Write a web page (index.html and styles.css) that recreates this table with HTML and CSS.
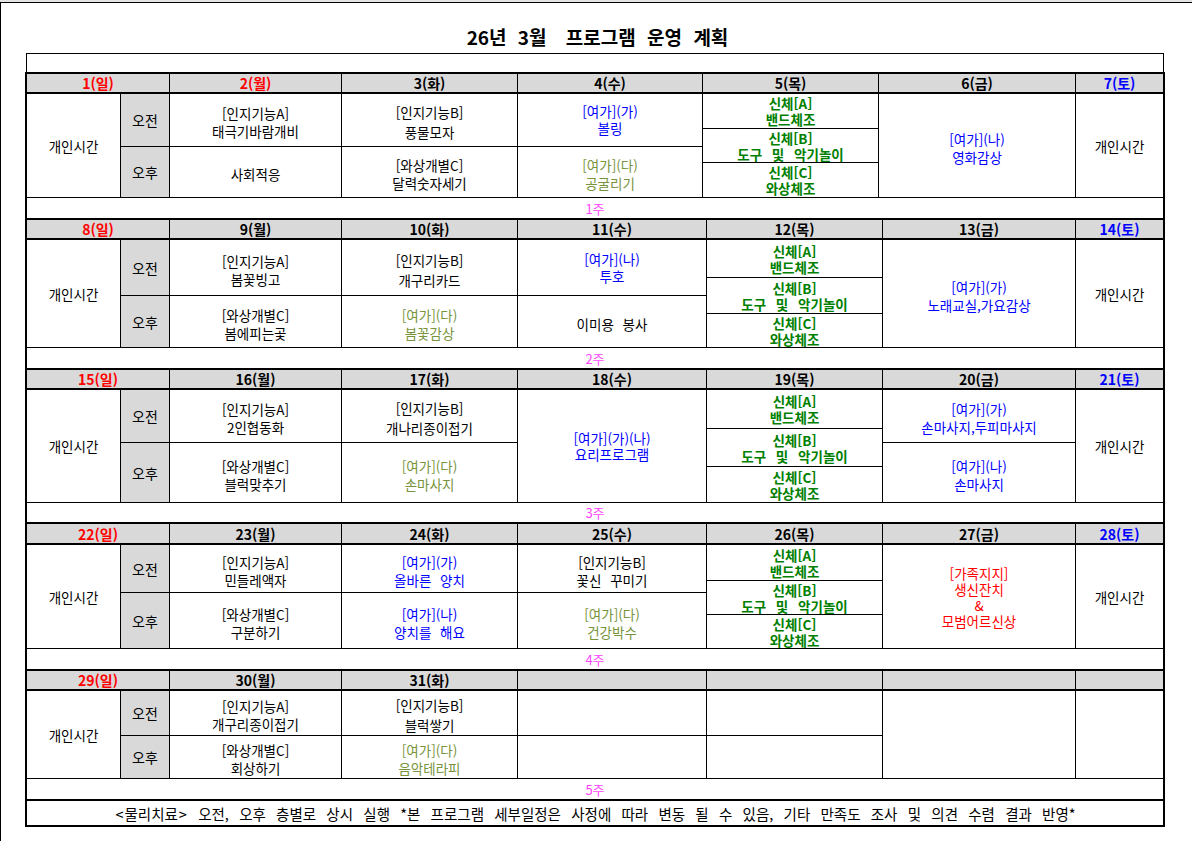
FILE: index.html
```html
<!DOCTYPE html>
<html lang="ko">
<head>
<meta charset="utf-8">
<title>26년 3월 프로그램 운영 계획</title>
<link rel="stylesheet" href="styles.css">
</head>
<body>
<div class="frame">
  <h1 class="title"><span class="t-a">26년 3월</span> 프로그램 운영 계획</h1>
  <div class="sheet">
    <div class="sheet-top"></div>
    <div class="weeks">

      <!-- week 1 -->
      <div class="wk w1">
        <div class="head">
          <div class="h span2 red">1(일)</div>
          <div class="h red">2(월)</div>
          <div class="h">3(화)</div>
          <div class="h">4(수)</div>
          <div class="h">5(목)</div>
          <div class="h">6(금)</div>
          <div class="h blue">7(토)</div>
        </div>
        <div class="body rows1">
          <div class="c k1 all">개인시간</div>
          <div class="c g k2 am">오전</div>
          <div class="c g k2 pm">오후</div>
          <div class="c k3 am"><p>[인지기능A]<br>태극기바람개비</p></div>
          <div class="c k3 pm"><p>사회적응</p></div>
          <div class="c k4 am"><p class="wide">[인지기능B]<br>풍물모자</p></div>
          <div class="c k4 pm"><p>[와상개별C]<br>달력숫자세기</p></div>
          <div class="c k5 am blue"><p class="up">[여가](가)<br>볼링</p></div>
          <div class="c k5 pm olive"><p>[여가](다)<br>공굴리기</p></div>
          <div class="c k6 t1 grn"><p>신체[A]<br>밴드체조</p></div>
          <div class="c k6 t2 grn"><p>신체[B]<br>도구 및 악기놀이</p></div>
          <div class="c k6 t3 grn"><p>신체[C]<br>와상체조</p></div>
          <div class="c k7 all blue"><p>[여가](나)<br>영화감상</p></div>
          <div class="c k8 all">개인시간</div>
        </div>
        <div class="lbl">1주</div>
      </div>

      <!-- week 2 -->
      <div class="wk">
        <div class="head">
          <div class="h span2 red">8(일)</div>
          <div class="h">9(월)</div>
          <div class="h">10(화)</div>
          <div class="h">11(수)</div>
          <div class="h">12(목)</div>
          <div class="h">13(금)</div>
          <div class="h blue">14(토)</div>
        </div>
        <div class="body rows2">
          <div class="c k1 all">개인시간</div>
          <div class="c g k2 am">오전</div>
          <div class="c g k2 pm">오후</div>
          <div class="c k3 am"><p>[인지기능A]<br>봄꽃빙고</p></div>
          <div class="c k3 pm"><p>[와상개별C]<br>봄에피는곷</p></div>
          <div class="c k4 am"><p class="wide">[인지기능B]<br>개구리카드</p></div>
          <div class="c k4 pm olive"><p>[여가](다)<br>봄꽃감상</p></div>
          <div class="c k5 am blue"><p class="up">[여가](나)<br>투호</p></div>
          <div class="c k5 pm"><p>이미용 봉사</p></div>
          <div class="c k6 t1 grn"><p>신체[A]<br>밴드체조</p></div>
          <div class="c k6 t2 grn"><p>신체[B]<br>도구 및 악기놀이</p></div>
          <div class="c k6 t3 grn"><p>신체[C]<br>와상체조</p></div>
          <div class="c k7 all blue"><p>[여가](가)<br>노래교실,가요감상</p></div>
          <div class="c k8 all">개인시간</div>
        </div>
        <div class="lbl">2주</div>
      </div>

      <!-- week 3 -->
      <div class="wk">
        <div class="head">
          <div class="h span2 red">15(일)</div>
          <div class="h">16(월)</div>
          <div class="h">17(화)</div>
          <div class="h">18(수)</div>
          <div class="h">19(목)</div>
          <div class="h">20(금)</div>
          <div class="h blue">21(토)</div>
        </div>
        <div class="body rows3">
          <div class="c k1 all">개인시간</div>
          <div class="c g k2 am">오전</div>
          <div class="c g k2 pm">오후</div>
          <div class="c k3 am"><p>[인지기능A]<br>2인협동화</p></div>
          <div class="c k3 pm"><p>[와상개별C]<br>블럭맞추기</p></div>
          <div class="c k4 am"><p class="wide">[인지기능B]<br>개나리종이접기</p></div>
          <div class="c k4 pm olive"><p>[여가](다)<br>손마사지</p></div>
          <div class="c k5 all blue"><p class="snug">[여가](가)(나)<br>요리프로그램</p></div>
          <div class="c k6 t1 grn"><p>신체[A]<br>밴드체조</p></div>
          <div class="c k6 t2 grn"><p>신체[B]<br>도구 및 악기놀이</p></div>
          <div class="c k6 t3 grn"><p>신체[C]<br>와상체조</p></div>
          <div class="c k7 am blue"><p>[여가](가)<br>손마사지,두피마사지</p></div>
          <div class="c k7 pm blue"><p>[여가](나)<br>손마사지</p></div>
          <div class="c k8 all">개인시간</div>
        </div>
        <div class="lbl short">3주</div>
      </div>

      <!-- week 4 -->
      <div class="wk">
        <div class="head tall">
          <div class="h span2 red">22(일)</div>
          <div class="h">23(월)</div>
          <div class="h">24(화)</div>
          <div class="h">25(수)</div>
          <div class="h">26(목)</div>
          <div class="h">27(금)</div>
          <div class="h blue">28(토)</div>
        </div>
        <div class="body rows4">
          <div class="c k1 all">개인시간</div>
          <div class="c g k2 am">오전</div>
          <div class="c g k2 pm">오후</div>
          <div class="c k3 am"><p>[인지기능A]<br>민들레액자</p></div>
          <div class="c k3 pm"><p>[와상개별C]<br>구분하기</p></div>
          <div class="c k4 am blue"><p>[여가](가)<br>올바른 양치</p></div>
          <div class="c k4 pm blue"><p>[여가](나)<br>양치를 해요</p></div>
          <div class="c k5 am"><p>[인지기능B]<br>꽃신 꾸미기</p></div>
          <div class="c k5 pm olive"><p>[여가](다)<br>건강박수</p></div>
          <div class="c k6 t1 grn"><p>신체[A]<br>밴드체조</p></div>
          <div class="c k6 t2 grn"><p>신체[B]<br>도구 및 악기놀이</p></div>
          <div class="c k6 t3 grn"><p>신체[C]<br>와상체조</p></div>
          <div class="c k7 all red"><p class="tall-lines">[가족지지]<br>생신잔치<br>&amp;<br>모범어르신상</p></div>
          <div class="c k8 all">개인시간</div>
        </div>
        <div class="lbl">4주</div>
      </div>

      <!-- week 5 -->
      <div class="wk">
        <div class="head">
          <div class="h span2 red">29(일)</div>
          <div class="h">30(월)</div>
          <div class="h">31(화)</div>
          <div class="h"></div>
          <div class="h"></div>
          <div class="h"></div>
          <div class="h"></div>
        </div>
        <div class="body rows5">
          <div class="c k1 all">개인시간</div>
          <div class="c g k2 am">오전</div>
          <div class="c g k2 pm">오후</div>
          <div class="c k3 am"><p>[인지기능A]<br>개구리종이접기</p></div>
          <div class="c k3 pm"><p>[와상개별C]<br>회상하기</p></div>
          <div class="c k4 am"><p class="wide">[인지기능B]<br>블럭쌓기</p></div>
          <div class="c k4 pm olive"><p>[여가](다)<br>음악테라피</p></div>
          <div class="c k5 am"></div>
          <div class="c k5 pm"></div>
          <div class="c k6 am"></div>
          <div class="c k6 pm"></div>
          <div class="c k7 all"></div>
          <div class="c k8 all"></div>
        </div>
        <div class="lbl">5주</div>
      </div>

      <div class="foot"><span class="ang">&lt;</span>물리치료<span class="ang">&gt;</span> 오전, 오후 층별로 상시 실행 *본 프로그램 세부일정은 사정에 따라 변동 될 수 있음, 기타 만족도 조사 및 의견 수렴 결과 반영*</div>
    </div>
  </div>
</div>
</body>
</html>
```
FILE: styles.css
```css
html, body {
  margin: 0;
  padding: 0;
  background: #fff;
}
body {
  border-top: 2px solid #e4e4e4;
  font-family: "Noto Sans CJK KR", "Noto Sans", sans-serif;
  color: #000;
}
.frame {
  border-top: 1px solid #000;
  border-left: 1px solid #000;
  height: 839px;
  box-sizing: border-box;
  overflow: hidden;
}
.title {
  margin: 0;
  padding-top: 20px;
  height: 28px;
  line-height: 28px;
  font-size: 19px;
  font-weight: bold;
  text-align: center;
  word-spacing: 6px;
  padding-left: 2px;
}
.t-a {
  margin-right: 8px;
}
.sheet {
  margin: 2px 0 0 24px;
  width: 1140px;
}
.sheet-top {
  height: 19px;
  margin: 0 1px;
  border: 1px solid #000;
  border-bottom: none;
  box-sizing: border-box;
}
.weeks {
  border-left: 2px solid #000;
  border-right: 2px solid #000;
}
.head,
.body {
  display: grid;
  grid-template-columns: 93px 48px 171px 175px 188px 175px 192px 87px;
  column-gap: 1px;
  background: #000;
}
.w1 .head,
.w1 .body {
  grid-template-columns: 93px 48px 171px 175px 184px 175px 196px 87px;
}
.head {
  height: 22px;
  box-sizing: border-box;
  border-top: 2px solid #000;
  border-bottom: 2px solid #000;
}
.head.tall {
  height: 23px;
}
.h {
  background: #d9d9d9;
  display: flex;
  align-items: center;
  justify-content: center;
  font-size: 14px;
  font-weight: bold;
  line-height: 18px;
}
.span2 {
  grid-column: span 2;
}
.body {
  row-gap: 1px;
  border-bottom: 1px solid #000;
}
.rows1 { grid-template-rows: 34px 17px 15px 34px; }
.rows2 { grid-template-rows: 37px 17px 17px 33px; }
.rows3 { grid-template-rows: 38px 13px 23px 35px; }
.rows4 { grid-template-rows: 35px 11px 21px 33px; }
.rows5 { grid-template-rows: 22px 21px 21px 20px; }

.c {
  background: #fff;
  display: flex;
  align-items: center;
  justify-content: center;
  text-align: center;
  font-size: 13.5px;
  line-height: 18px;
  word-spacing: 5px;
  min-width: 0;
}
.c p {
  margin: 0;
  padding-top: 4px;
}
.c p.wide {
  line-height: 20px;
}
.c p.up {
  line-height: 17px;
  padding-top: 0;
}
.c p.snug {
  line-height: 16px;
  padding-top: 0;
}
.c.g {
  background: #d9d9d9;
  font-size: 14px;
}
.k1 { grid-column: 1; }
.k2 { grid-column: 2; }
.k3 { grid-column: 3; }
.k4 { grid-column: 4; }
.k5 { grid-column: 5; }
.k6 { grid-column: 6; }
.k7 { grid-column: 7; }
.k8 { grid-column: 8; }
.all { grid-row: 1 / 5; }
.am { grid-row: 1 / 3; }
.pm { grid-row: 3 / 5; }
.t1 { grid-row: 1 / 2; }
.t2 { grid-row: 2 / 4; }
.t3 { grid-row: 4 / 5; }

.grn {
  color: #008000;
  font-weight: bold;
  line-height: 16px;
  word-spacing: 6px;
}
.grn p {
  padding-top: 0;
}
.red { color: #ff0000; }
.blue { color: #0000ff; }
.olive { color: #77933c; }
.c p.tall-lines {
  line-height: 16px;
  padding-top: 0;
}
.lbl {
  height: 20px;
  display: flex;
  align-items: center;
  justify-content: center;
  font-size: 13px;
  color: #ff44ff;
  background: #fff;
}
.lbl.short {
  height: 19px;
}
.foot {
  height: 28px;
  box-sizing: border-box;
  border-top: 2px solid #000;
  border-bottom: 2px solid #000;
  display: flex;
  align-items: center;
  justify-content: center;
  font-size: 14.5px;
  word-spacing: 6.2px;
  white-space: pre;
}
.ang {
  padding: 0 1px;
}
```
